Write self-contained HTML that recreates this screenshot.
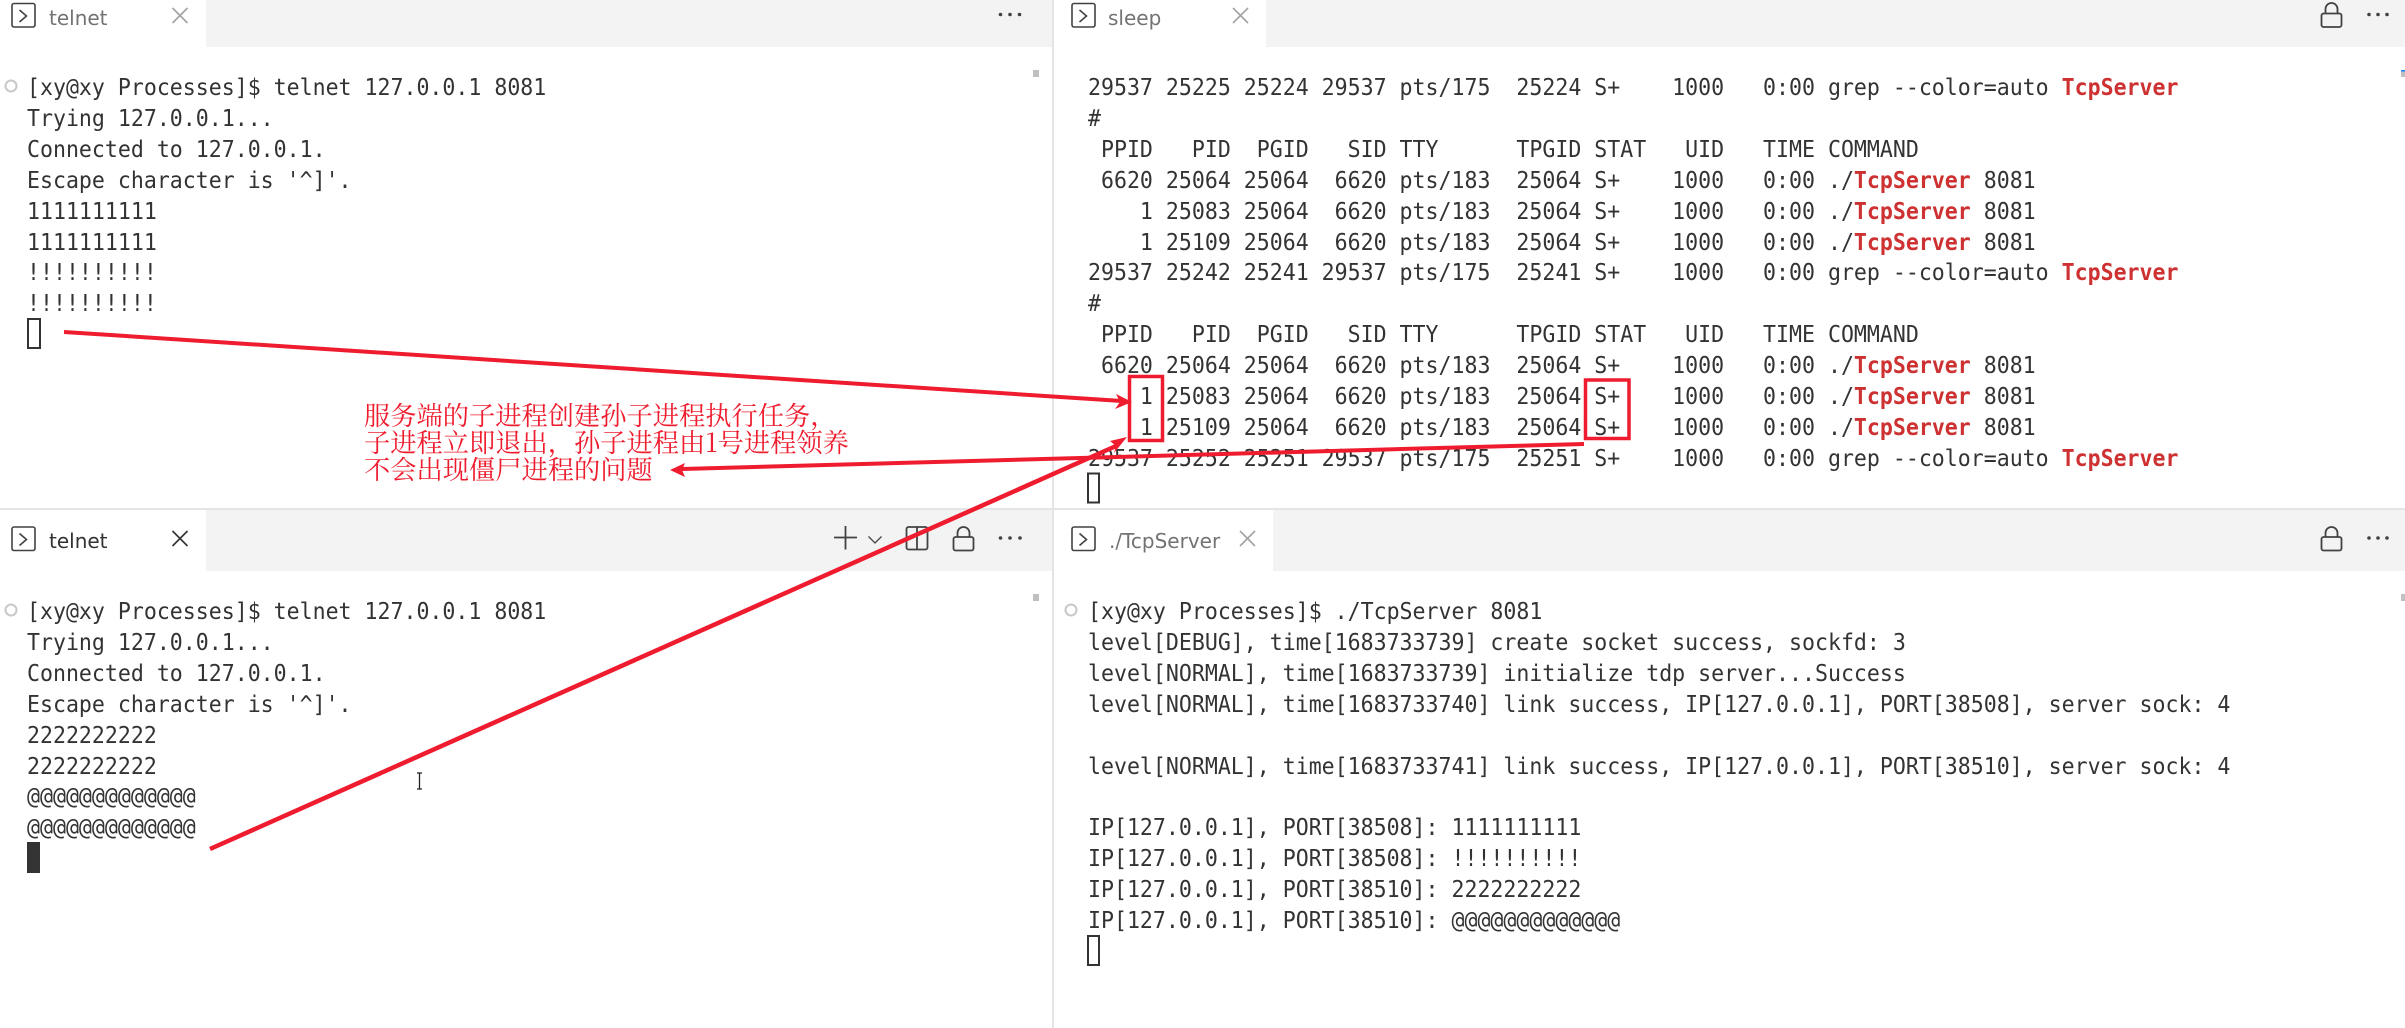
<!DOCTYPE html>
<html lang="zh">
<head>
<meta charset="utf-8">
<title>terminal</title>
<style>
html,body{margin:0;padding:0;background:#fff}
body{position:relative;width:2405px;height:1028px;overflow:hidden}
.bar{position:absolute;background:#f3f3f3}
.tab{position:absolute;background:#fff}
.div{position:absolute;background:#e5e5e5}
pre{position:absolute;margin:0;font-family:"DejaVu Sans Mono","Liberation Mono",monospace;font-size:23px;line-height:30.9px;color:#333;transform:scaleX(.9375);transform-origin:0 0}
pre b{color:#cd3131;font-weight:700}
.t{position:absolute;font-family:"DejaVu Sans","Liberation Sans",sans-serif;font-size:20px;line-height:28px;white-space:nowrap}
.note{position:absolute;left:364px;font-family:"Noto Serif CJK SC","Liberation Serif",serif;font-size:26.25px;line-height:27px;color:#ee1c2e;white-space:nowrap}
svg{position:absolute;left:0;top:0}
</style>
</head>
<body>
<div class="bar" style="left:0;top:0;width:1052px;height:47px"></div>
<div class="bar" style="left:1054px;top:0;width:1351px;height:47px"></div>
<div class="bar" style="left:0;top:510px;width:1052px;height:61px"></div>
<div class="bar" style="left:1054px;top:510px;width:1351px;height:61px"></div>
<div class="tab" style="left:0;top:0;width:206px;height:47px"></div>
<div class="tab" style="left:1054px;top:0;width:212px;height:47px"></div>
<div class="tab" style="left:0;top:510px;width:206px;height:61px"></div>
<div class="tab" style="left:1054px;top:510px;width:219px;height:61px"></div>
<div class="div" style="left:0;top:508px;width:2405px;height:2px"></div>
<div class="div" style="left:1052px;top:0;width:2px;height:1028px"></div>

<div class="t" style="left:49px;top:4px;color:#737373">telnet</div>
<div class="t" style="left:1108px;top:4px;color:#737373">sleep</div>
<div class="t" style="left:49px;top:527px;color:#333">telnet</div>
<div class="t" style="left:1109px;top:527px;color:#737373">./TcpServer</div>

<pre style="left:27px;top:73px">[xy@xy Processes]$ telnet 127.0.0.1 8081
Trying 127.0.0.1...
Connected to 127.0.0.1.
Escape character is '^]'.
1111111111
1111111111
!!!!!!!!!!
!!!!!!!!!!</pre>

<pre style="left:1088px;top:73px">29537 25225 25224 29537 pts/175  25224 S+    1000   0:00 grep --color=auto <b>TcpServer</b>
#
 PPID   PID  PGID   SID TTY      TPGID STAT   UID   TIME COMMAND
 6620 25064 25064  6620 pts/183  25064 S+    1000   0:00 ./<b>TcpServer</b> 8081
    1 25083 25064  6620 pts/183  25064 S+    1000   0:00 ./<b>TcpServer</b> 8081
    1 25109 25064  6620 pts/183  25064 S+    1000   0:00 ./<b>TcpServer</b> 8081
29537 25242 25241 29537 pts/175  25241 S+    1000   0:00 grep --color=auto <b>TcpServer</b>
#
 PPID   PID  PGID   SID TTY      TPGID STAT   UID   TIME COMMAND
 6620 25064 25064  6620 pts/183  25064 S+    1000   0:00 ./<b>TcpServer</b> 8081
    1 25083 25064  6620 pts/183  25064 S+    1000   0:00 ./<b>TcpServer</b> 8081
    1 25109 25064  6620 pts/183  25064 S+    1000   0:00 ./<b>TcpServer</b> 8081
29537 25252 25251 29537 pts/175  25251 S+    1000   0:00 grep --color=auto <b>TcpServer</b></pre>

<pre style="left:27px;top:597px">[xy@xy Processes]$ telnet 127.0.0.1 8081
Trying 127.0.0.1...
Connected to 127.0.0.1.
Escape character is '^]'.
2222222222
2222222222
@@@@@@@@@@@@@
@@@@@@@@@@@@@</pre>

<pre style="left:1088px;top:597px">[xy@xy Processes]$ ./TcpServer 8081
level[DEBUG], time[1683733739] create socket success, sockfd: 3
level[NORMAL], time[1683733739] initialize tdp server...Success
level[NORMAL], time[1683733740] link success, IP[127.0.0.1], PORT[38508], server sock: 4

level[NORMAL], time[1683733741] link success, IP[127.0.0.1], PORT[38510], server sock: 4

IP[127.0.0.1], PORT[38508]: 1111111111
IP[127.0.0.1], PORT[38508]: !!!!!!!!!!
IP[127.0.0.1], PORT[38510]: 2222222222
IP[127.0.0.1], PORT[38510]: @@@@@@@@@@@@@</pre>

<div class="note" style="top:401px">服务端的子进程创建孙子进程执行任务&#xFF0C;</div>
<div class="note" style="top:428px">子进程立即退出&#xFF0C;孙子进程由1号进程领养</div>
<div class="note" style="top:455px">不会出现僵尸进程的问题</div>

<svg width="2405" height="1028" viewBox="0 0 2405 1028" fill="none">
  <!-- terminal tab icons -->
  <g stroke="#424242" stroke-width="1.6">
    <rect x="12" y="3.5" width="23" height="23.5" rx="2"/><path d="M19.5 10l7 6-7 6"/>
    <rect x="1072" y="3.5" width="23" height="23.5" rx="2"/><path d="M1079.5 10l7 6-7 6"/>
    <rect x="12" y="527" width="23" height="23.5" rx="2"/><path d="M19.5 533.5l7 6-7 6"/>
    <rect x="1072" y="527" width="23" height="23.5" rx="2"/><path d="M1079.5 533.5l7 6-7 6"/>
  </g>
  <!-- close icons -->
  <path d="M172.500 8l15 15M187.500 8l-15 15" stroke="#a3a3a3" stroke-width="1.600"/>
  <path d="M1233 8l15 15M1248 8l-15 15" stroke="#a3a3a3" stroke-width="1.600"/>
  <path d="M172.500 531l15 15M187.500 531l-15 15" stroke="#333" stroke-width="1.600"/>
  <path d="M1240 531l15 15M1255 531l-15 15" stroke="#a3a3a3" stroke-width="1.600"/>
  <!-- locks -->
  <g stroke="#424242" stroke-width="1.800">
    <rect x="2321.500" y="13.500" width="20" height="13.500" rx="2"/><path d="M2325.500 13.500v-4.500a6 6 0 0 1 12 0v4.500"/>
    <rect x="2321.500" y="537" width="20" height="13.500" rx="2"/><path d="M2325.500 537v-4a6 6 0 0 1 12 0v4"/>
    <rect x="953.500" y="537" width="20" height="13.500" rx="2"/><path d="M957.500 537v-4a6 6 0 0 1 12 0v4"/>
    <!-- split -->
    <rect x="906.500" y="527" width="21" height="22.500" rx="2"/><path d="M917 527v22.500"/>
    <!-- plus -->
    <path d="M834 537.500h23M845.500 526v23.500"/>
  </g>
  <path d="M868.500 536.500l6.500 6.500 6.500-6.500" stroke="#424242" stroke-width="1.300"/>
  <!-- dots -->
  <g fill="#424242">
    <circle cx="1000.500" cy="14.500" r="1.800"/><circle cx="1010" cy="14.500" r="1.800"/><circle cx="1019.500" cy="14.500" r="1.800"/>
    <circle cx="2369" cy="14.500" r="1.800"/><circle cx="2378" cy="14.500" r="1.800"/><circle cx="2387" cy="14.500" r="1.800"/>
    <circle cx="1000.500" cy="538" r="1.800"/><circle cx="1010" cy="538" r="1.800"/><circle cx="1020" cy="538" r="1.800"/>
    <circle cx="2369" cy="538" r="1.800"/><circle cx="2378" cy="538" r="1.800"/><circle cx="2387" cy="538" r="1.800"/>
  </g>
  <!-- shell integration decorations -->
  <g stroke="#c8c8c8" stroke-width="2">
    <circle cx="11" cy="86" r="5.500"/><circle cx="11" cy="610" r="5.500"/><circle cx="1071" cy="610" r="5.500"/>
  </g>
  <!-- overview ruler marks -->
  <g fill="#c0c0c0">
    <rect x="1033" y="70" width="6" height="7"/><rect x="1033" y="594" width="6" height="7"/>
    <rect x="2401" y="70" width="4" height="7"/><rect x="2401" y="594" width="4" height="7"/>
  </g>
  <rect x="2401" y="70" width="4" height="1.500" fill="#1a85ff"/>
  <!-- cursors -->
  <rect x="28" y="319" width="12" height="29" stroke="#333" stroke-width="2"/>
  <rect x="1088" y="473.500" width="11" height="29" stroke="#333" stroke-width="2"/>
  <rect x="1088" y="936" width="11" height="29" stroke="#333" stroke-width="2"/>
  <rect x="27" y="842" width="13" height="31" fill="#333"/>
  <!-- I-beam -->
  <path d="M417 773h5M417 789h5M419.500 773v16" stroke="#222" stroke-width="1.300"/>
  <!-- red annotations -->
  <g stroke="#ee1c2e" stroke-width="4" fill="none">
    <rect x="1129.500" y="376.500" width="33" height="64" stroke-width="3.500"/>
    <rect x="1585.500" y="380" width="43.500" height="58.500" stroke-width="3.500"/>
    <path d="M64 332L1122 401"/>
    <path d="M1584 444L682 469"/>
    <path d="M210 849L1116 446" stroke-width="4.500"/>
  </g>
  <g fill="#ee1c2e">
    <path d="M1132 402L1116 394L1120 402L1115 409Z"/>
    <path d="M670 470L685 463L682 470L685 477Z"/>
    <path d="M1127 437L1110 441L1116 446L1114 453Z"/>
  </g>
</svg>
</body>
</html>
